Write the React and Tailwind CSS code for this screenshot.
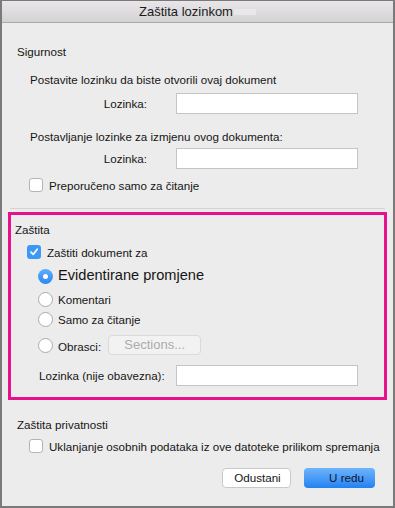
import React from "react";

const font = { fontFamily: '"Liberation Sans", Arial, sans-serif' };

function Checkbox({ checked }) {
  if (checked) {
    return (
      <span className="w-[14px] h-[14px] rounded-[3px] bg-[#3d98f5] flex items-center justify-center shrink-0">
        <svg width="10" height="10" viewBox="0 0 10 10">
          <path d="M2 5.2 L4.2 7.4 L8.2 2.2" fill="none" stroke="#fff" strokeWidth="1.7" strokeLinecap="round" strokeLinejoin="round" />
        </svg>
      </span>
    );
  }
  return <span className="w-[14px] h-[14px] rounded-[3px] bg-white border border-[#b4b4b4] shrink-0" />;
}

function Radio({ checked }) {
  if (checked) {
    return (
      <span className="w-[15px] h-[15px] rounded-full bg-gradient-to-b from-[#5eaefa] to-[#2a87f3] flex items-center justify-center shrink-0">
        <span className="w-[5px] h-[5px] rounded-full bg-white" />
      </span>
    );
  }
  return <span className="w-[15px] h-[15px] rounded-full bg-white border border-[#ababab] shrink-0" />;
}

function Input({ className = "" }) {
  return <div className={`w-[182px] h-[21px] bg-white border border-[#c4c4c4] shrink-0 ${className}`} />;
}

export default function App() {
  return (
    <div className="w-[395px] h-[508px] bg-[#ececec] border-x-2 border-b-2 border-t border-[#7a7a7a] text-[11.6px] text-[#151515] whitespace-nowrap flex flex-col" style={font}>
      <div className="h-[22px] shrink-0 bg-gradient-to-b from-[#e8e6e8] to-[#d4d2d4] border-b border-[#a9a9a9] flex items-center justify-center">
        <span className="text-[13px] text-[#1a1a1a] leading-none">Zaštita lozinkom</span>
        <span className="w-[22px] h-[6px] bg-[#e9e8e9] ml-px" />
      </div>

      <div className="flex flex-col px-[6px]">
        <div className="h-[16px] mt-[21px] flex items-center pl-[9px]">Sigurnost</div>
        <div className="h-[16px] mt-[12px] flex items-center pl-[22px]">Postavite lozinku da biste otvorili ovaj dokument</div>
        <div className="h-[21px] mt-[5px] flex items-center">
          <span className="w-[139px] text-right">Lozinka:</span>
          <Input className="ml-[29px]" />
        </div>
        <div className="h-[16px] mt-[15px] flex items-center pl-[22px]">Postavljanje lozinke za izmjenu ovog dokumenta:</div>
        <div className="h-[21px] mt-[3px] flex items-center">
          <span className="w-[139px] text-right">Lozinka:</span>
          <Input className="ml-[29px]" />
        </div>
        <div className="h-[14px] mt-[9px] flex items-center pl-[21px] gap-[6px]">
          <Checkbox />
          <span className="pt-[2px]">Preporučeno samo za čitanje</span>
        </div>
        <div className="h-px mt-[16px] mx-[2px] bg-[#d3d3d3]" />

        <div className="mt-[3px] border-[3px] border-[#e8118c] flex flex-col pb-[11px]">
          <div className="h-[16px] mt-[7px] flex items-center pl-[4px]">Zaštita</div>
          <div className="h-[14px] mt-[7px] flex items-center pl-[16px] gap-[6px]">
            <Checkbox checked />
            <span className="pt-[2px]">Zaštiti dokument za</span>
          </div>
          <div className="h-[16px] mt-[9px] flex items-center pl-[27px] gap-[5px]">
            <Radio checked />
            <span className="text-[14.6px]">Evidentirane promjene</span>
          </div>
          <div className="h-[16px] mt-[7px] flex items-center pl-[27px] gap-[5px]">
            <Radio />
            <span className="pt-[2px]">Komentari</span>
          </div>
          <div className="h-[16px] mt-[4px] flex items-center pl-[27px] gap-[5px]">
            <Radio />
            <span className="pt-[2px]">Samo za čitanje</span>
          </div>
          <div className="h-[20px] mt-[8px] flex items-center pl-[27px] gap-[5px]">
            <Radio />
            <span className="pt-[4px]">Obrasci:</span>
            <span className="ml-[2px] w-[93px] h-[20px] rounded-[4px] bg-[#f2f2f2] border border-[#dadada] flex items-center justify-center text-[13px] text-[#ababab]">
              Sections...
            </span>
          </div>
          <div className="h-[21px] mt-[10px] flex items-center pl-[28px]">
            <span className="w-[137px]">Lozinka (nije obavezna):</span>
            <Input />
          </div>
        </div>

        <div className="h-[16px] mt-[17px] flex items-center pl-[9px]">Zaštita privatnosti</div>
        <div className="h-[15px] mt-[5px] flex items-center pl-[21px] gap-[6px]">
          <Checkbox />
          <span className="pt-[2px]">Uklanjanje osobnih podataka iz ove datoteke prilikom spremanja</span>
        </div>
        <div className="h-[20px] mt-[15px] flex justify-end gap-[13px] pr-[12px]">
          <span className="w-[69px] h-[20px] rounded-[4px] bg-white border border-[#c9c9c9] flex items-center justify-center pl-[2px]">Odustani</span>
          <span className="w-[71px] h-[20px] rounded-[4px] bg-gradient-to-b from-[#6db4fb] to-[#1f82f2] flex items-center justify-center pl-[14px] text-[#0c1530]">U redu</span>
        </div>
      </div>
    </div>
  );
}
